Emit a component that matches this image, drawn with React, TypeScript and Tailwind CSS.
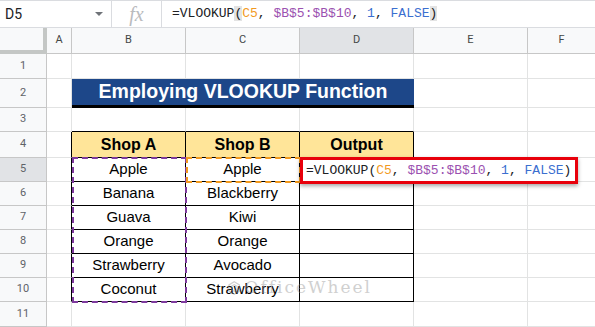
import React from "react";

const grid = "border-[#e2e3e3]";
const body = "font-['Liberation_Sans',Arial,sans-serif]";
const mono = "font-['Liberation_Mono','DejaVu_Sans_Mono',monospace]";

const tableRows = [
  { n: 5, b: "Apple", c: "Apple" },
  { n: 6, b: "Banana", c: "Blackberry" },
  { n: 7, b: "Guava", c: "Kiwi" },
  { n: 8, b: "Orange", c: "Orange" },
  { n: 9, b: "Strawberry", c: "Avocado" },
  { n: 10, b: "Coconut", c: "Strawberry" },
];

const Formula = ({ parens = false }: { parens?: boolean }) => (
  <span className={`${mono} text-[13px] text-[#202124] whitespace-pre`}>
    =VLOOKUP<span className={parens ? "bg-[#e3e3e3]" : ""}>(</span>
    <span className="text-[#f29a1f]">C5</span>,{" "}
    <span className="text-[#9b51b0]">$B$5:$B$10</span>,{" "}
    <span className="text-[#3b6fd0]">1</span>,{" "}
    <span className="text-[#3b6fd0]">FALSE</span>
    <span className={parens ? "bg-[#e3e3e3]" : ""}>)</span>
  </span>
);

const RowNum = ({ n, active = false }: { n: number | string; active?: boolean }) => (
  <div
    className={`w-[47px] shrink-0 flex items-center justify-center border-r border-b border-[#c7c7c7] text-[11px] text-[#5f6368] font-['Roboto',sans-serif] ${
      active ? "bg-[#e1e3e6]" : "bg-[#f8f9fa]"
    }`}
  >
    {n}
  </div>
);

const Blank = ({ w, cls = "" }: { w: string; cls?: string }) => (
  <div className={`${w} shrink-0 border-r border-b ${grid} ${cls}`} />
);

const Tail = () => (
  <>
    <Blank w="w-[114px]" />
    <div className={`flex-1 border-b ${grid}`} />
  </>
);

export default function App() {
  return (
    <div className="relative w-[595px] h-[327px] overflow-hidden bg-white">
      {/* formula bar */}
      <div className="flex h-[28px] border-t border-b border-[#dadce0] bg-white">
        <div className="w-[112px] shrink-0 flex items-center justify-between pl-[5px] pr-[8px] border-r border-[#dadce0]">
          <span className="font-['Roboto',sans-serif] text-[14px] text-[#202124]">D5</span>
          <span className="w-0 h-0 border-l-[4px] border-r-[4px] border-t-[4px] border-l-transparent border-r-transparent border-t-[#6f7378]" />
        </div>
        <div className="w-[50px] shrink-0 flex items-center justify-center border-r border-[#dadce0]">
          <span className="font-['Liberation_Serif',serif] italic text-[20px] text-[#b9bbbe] leading-none">fx</span>
        </div>
        <div className="flex items-center pl-[10px]">
          <Formula parens />
        </div>
      </div>

      {/* column headers */}
      <div className="flex h-[26px] bg-[#f8f9fa] font-['Roboto',sans-serif] text-[11px] text-[#444746]">
        <div className="w-[47px] shrink-0 border-r-[4px] border-b-[4px] border-[#c4c7c5]" />
        {[
          { k: "A", w: "w-[25px]" },
          { k: "B", w: "w-[114px]" },
          { k: "C", w: "w-[114px]" },
          { k: "D", w: "w-[114px]" },
          { k: "E", w: "w-[114px]" },
        ].map((c) => (
          <div
            key={c.k}
            className={`${c.w} shrink-0 flex items-center justify-center border-r border-b border-[#c7c7c7] ${
              c.k === "D" ? "bg-[#e1e3e6]" : ""
            }`}
          >
            {c.k}
          </div>
        ))}
        <div className="flex-1 flex items-center justify-center border-b border-[#c7c7c7]">F</div>
      </div>

      {/* row 1 */}
      <div className="flex h-[25px]">
        <RowNum n={1} />
        <Blank w="w-[25px]" />
        <Blank w="w-[114px]" />
        <Blank w="w-[114px]" />
        <Blank w="w-[114px]" />
        <Tail />
      </div>

      {/* row 2 title */}
      <div className="flex h-[29px]">
        <RowNum n={2} />
        <Blank w="w-[25px]" />
        <div
          className={`w-[342px] shrink-0 flex items-center justify-center bg-[#1d4789] border-b-[3px] border-black ${body} font-bold text-[19.5px] text-white`}
        >
          Employing VLOOKUP Function
        </div>
        <Tail />
      </div>

      {/* row 3 */}
      <div className="flex h-[24px]">
        <RowNum n={3} />
        <Blank w="w-[25px]" />
        <div className={`w-[114px] shrink-0 border-r ${grid} border-b border-b-black`} />
        <div className={`w-[114px] shrink-0 border-r ${grid} border-b border-b-black`} />
        <div className={`w-[114px] shrink-0 border-r ${grid} border-b border-b-black`} />
        <Tail />
      </div>

      {/* row 4 header */}
      <div className="flex h-[26px]">
        <RowNum n={4} />
        <div className={`w-[25px] shrink-0 border-r border-r-black border-b ${grid}`} />
        {["Shop A", "Shop B", "Output"].map((t) => (
          <div
            key={t}
            className={`w-[114px] shrink-0 flex items-center justify-center bg-[#ffe599] border-r border-b border-black ${body} font-bold text-[16px] text-black`}
          >
            {t}
          </div>
        ))}
        <Tail />
      </div>

      {tableRows.map((r) => (
        <div key={r.n} className="flex h-[24px]">
          <RowNum n={r.n} active={r.n === 5} />
          <div className={`w-[25px] shrink-0 border-r border-r-black border-b ${grid}`} />
          {[r.b, r.c, ""].map((t, i) => (
            <div
              key={i}
              className={`w-[114px] shrink-0 flex items-center justify-center border-r border-b border-black ${body} text-[15px] text-black`}
            >
              {t}
            </div>
          ))}
          <Tail />
        </div>
      ))}

      {/* row 11 */}
      <div className="flex h-[25px]">
        <RowNum n={11} />
        <Blank w="w-[25px]" />
        <Blank w="w-[114px]" />
        <Blank w="w-[114px]" />
        <Blank w="w-[114px]" />
        <Tail />
      </div>

      {/* copy-range highlights */}
      <div className="absolute left-[72px] top-[157px] w-[115px] h-[146px] border-2 border-dashed border-[#7e3a9e] pointer-events-none" />
      <div className="absolute left-[186px] top-[157px] w-[115px] h-[26px] border-2 border-dashed border-[#f39a1e] pointer-events-none" />

      {/* in-cell editor */}
      <div className="absolute left-[300px] top-[157px] w-[278px] h-[27px] bg-white border-[3px] border-[#e8000b] shadow-[0_2px_4px_rgba(0,0,0,0.35)] flex items-center pl-[3px]">
        <Formula />
      </div>

      {/* watermark */}
      <div className="absolute left-[222px] top-[270px] w-[150px] h-[36px] flex items-center gap-[4px] pl-[6px] opacity-40 pointer-events-none">
        <svg width="26" height="30" viewBox="0 0 26 30" fill="none" stroke="#8a8a8a" strokeWidth="2.5">
          <path d="M13 2 L24 8.5 V21.5 L13 28 L2 21.5 V8.5 Z" />
          <path d="M13 8 L19 11.5 V18.5 L13 22 L7 18.5 V11.5 Z" />
        </svg>
        <span className="font-['DejaVu_Serif',serif] text-[17px] tracking-[2px] text-[#8c8c8c]">OfficeWheel</span>
      </div>
    </div>
  );
}
